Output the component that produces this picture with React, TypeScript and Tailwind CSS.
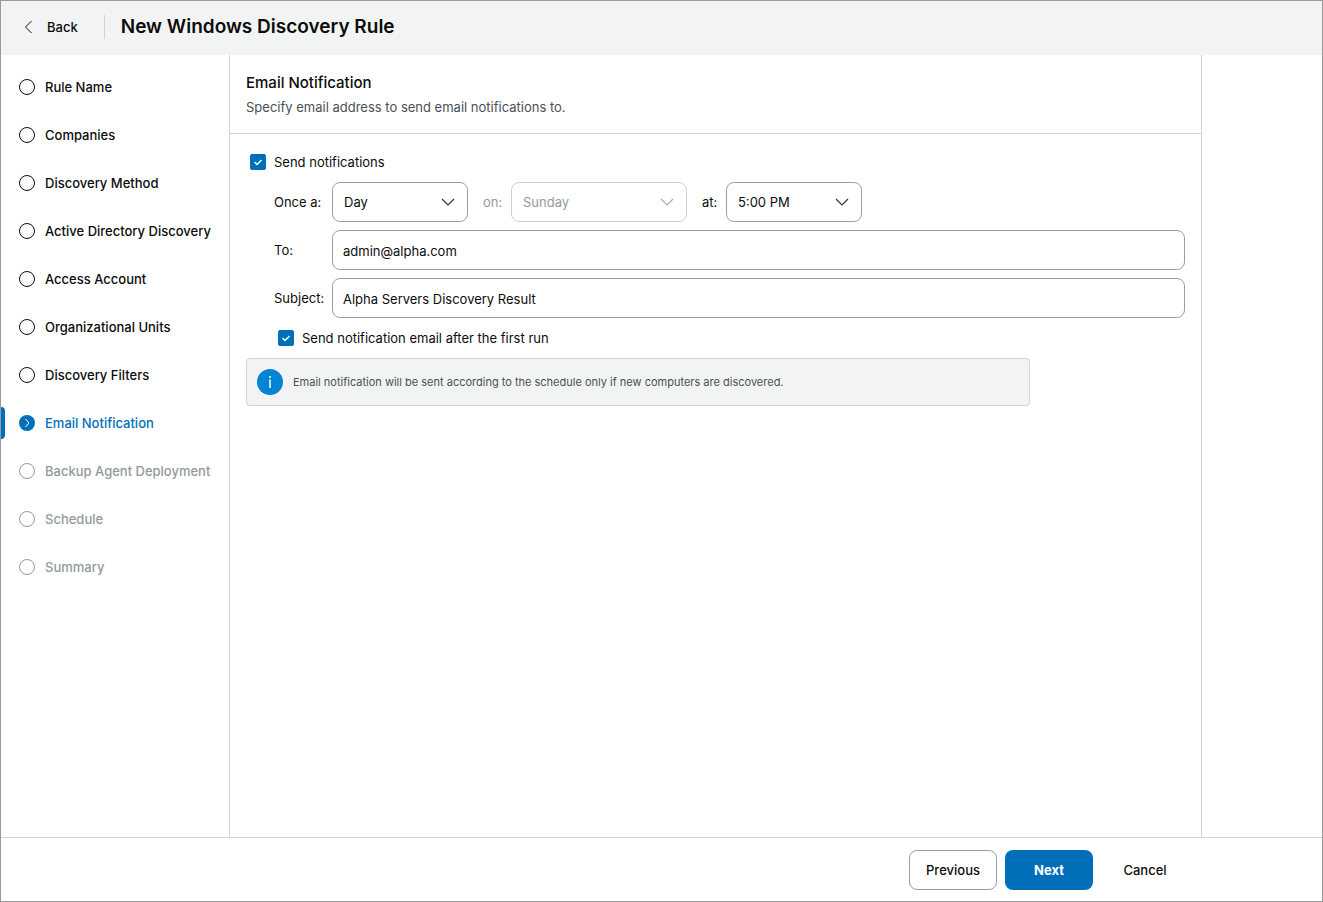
import { useState } from "react";
import type { SelectHTMLAttributes } from "react";
import clsx from "clsx";

type StepStatus = "done" | "current" | "disabled";

//constants
const steps: { label: string; status: StepStatus }[] = [
  { label: "Rule Name", status: "done" },
  { label: "Companies", status: "done" },
  { label: "Discovery Method", status: "done" },
  { label: "Active Directory Discovery", status: "done" },
  { label: "Access Account", status: "done" },
  { label: "Organizational Units", status: "done" },
  { label: "Discovery Filters", status: "done" },
  { label: "Email Notification", status: "current" },
  { label: "Backup Agent Deployment", status: "disabled" },
  { label: "Schedule", status: "disabled" },
  { label: "Summary", status: "disabled" },
];

const periods = ["Day", "Week", "Month"];
const weekDays = [
  "Sunday",
  "Monday",
  "Tuesday",
  "Wednesday",
  "Thursday",
  "Friday",
  "Saturday",
];
const times = ["8:00 AM", "12:00 PM", "5:00 PM", "8:00 PM"];

const StepIcon = ({ status }: { status: StepStatus }) => {
  if (status === "current") {
    return (
      <svg width="16" height="16" viewBox="0 0 16 16" fill="none">
        <circle cx="8" cy="8" r="8" fill="#006fba" />
        <path d="M6.5 4 10 8l-3.5 4" stroke="#fff" />
      </svg>
    );
  }

  return (
    <svg width="16" height="16" viewBox="0 0 16 16" fill="none">
      <circle cx="8" cy="8" r="7.5" stroke="currentColor" />
    </svg>
  );
};

const Sidebar = () => {
  return (
    <nav className="w-[229px] shrink-0 border-r border-[#d0d3d4]">
      <ol className="flex flex-col gap-4 pt-4">
        {steps.map(({ label, status }) => (
          <li key={label} className="flex h-8 items-center">
            <span
              className={clsx(
                "h-8 w-1 rounded-r-sm",
                status === "current" && "bg-[#006fba]"
              )}
            />
            <button
              type="button"
              disabled={status === "disabled"}
              aria-current={status === "current" ? "step" : undefined}
              className={clsx(
                "flex items-center gap-2.5 pl-3.5 font-medium whitespace-nowrap",
                status === "done" && "text-[#0c0c0d]",
                status === "current" && "text-[#006fba]",
                status === "disabled" && "text-[#939a9e]"
              )}
            >
              <StepIcon status={status} />
              {label}
            </button>
          </li>
        ))}
      </ol>
    </nav>
  );
};

const Checkbox = ({
  id,
  label,
  checked,
  onChange,
}: {
  id: string;
  label: string;
  checked: boolean;
  onChange: (checked: boolean) => void;
}) => {
  return (
    <div className="flex h-4 items-center gap-2">
      <span className="grid size-4">
        <input
          id={id}
          type="checkbox"
          checked={checked}
          onChange={(e) => onChange(e.target.checked)}
          className="col-start-1 row-start-1 size-4 appearance-none rounded-xs border border-[#9a9fa2] checked:border-[#006fba] checked:bg-[#006fba]"
        />
        {checked && (
          <svg
            className="pointer-events-none col-start-1 row-start-1"
            width="16"
            height="16"
            viewBox="0 0 16 16"
            fill="none"
          >
            <path d="m4.5 8 2.5 2.5 4.5-4.5" stroke="#fff" strokeWidth="1.5" />
          </svg>
        )}
      </span>
      <label htmlFor={id}>{label}</label>
    </div>
  );
};

const Select = ({
  options,
  width,
  ...props
}: {
  options: string[];
  width: string;
} & SelectHTMLAttributes<HTMLSelectElement>) => {
  return (
    <div className={clsx("grid items-center", width)}>
      <select
        {...props}
        className="col-start-1 row-start-1 h-10 w-full appearance-none rounded-lg border border-[#9a9fa2] bg-white pr-9 pl-[11px] disabled:border-[#cdd0d2] disabled:text-[#939a9e] disabled:opacity-100"
      >
        {options.map((option) => (
          <option key={option}>{option}</option>
        ))}
      </select>
      <svg
        className={clsx(
          "pointer-events-none col-start-1 row-start-1 mr-[13px] justify-self-end",
          props.disabled ? "text-[#a5aaad]" : "text-[#2d3033]"
        )}
        width="14"
        height="8"
        viewBox="0 0 14 8"
        fill="none"
      >
        <path d="m1 1 6 6 6-6" stroke="currentColor" strokeWidth="1.1" />
      </svg>
    </div>
  );
};

const TextField = ({
  id,
  label,
  value,
  onChange,
}: {
  id: string;
  label: string;
  value: string;
  onChange: (value: string) => void;
}) => {
  return (
    <div className="flex items-center">
      <label htmlFor={id} className="w-[58px] shrink-0">
        {label}
      </label>
      <input
        id={id}
        type="text"
        value={value}
        onChange={(e) => onChange(e.target.value)}
        className="h-10 w-full min-w-0 rounded-lg border border-[#9a9fa2] px-2.5 pt-0.5"
      />
    </div>
  );
};

const NotificationForm = () => {
  const [enabled, setEnabled] = useState(true);
  const [period, setPeriod] = useState("Day");
  const [weekDay, setWeekDay] = useState("Sunday");
  const [time, setTime] = useState("5:00 PM");
  const [to, setTo] = useState("admin@alpha.com");
  const [subject, setSubject] = useState("Alpha Servers Discovery Result");
  const [afterFirstRun, setAfterFirstRun] = useState(true);

  const weekDayDisabled = period !== "Week";

  return (
    <form className="flex flex-col gap-3 px-4 py-5">
      <div className="pl-1">
        <Checkbox
          id="enabled"
          label="Send notifications"
          checked={enabled}
          onChange={setEnabled}
        />
      </div>
      <div className="flex flex-col gap-2 pl-7">
        <div className="flex items-center">
          <label htmlFor="period" className="w-[58px] shrink-0">
            Once a:
          </label>
          <Select
            id="period"
            width="w-[136px]"
            options={periods}
            value={period}
            onChange={(e) => setPeriod(e.target.value)}
          />
          <label
            htmlFor="weekDay"
            className={clsx(
              "ml-[15px] w-7",
              weekDayDisabled && "text-[#939a9e]"
            )}
          >
            on:
          </label>
          <Select
            id="weekDay"
            width="w-[176px]"
            options={weekDays}
            value={weekDay}
            disabled={weekDayDisabled}
            onChange={(e) => setWeekDay(e.target.value)}
          />
          <label htmlFor="time" className="ml-[15px] w-6">
            at:
          </label>
          <Select
            id="time"
            width="w-[136px]"
            options={times}
            value={time}
            onChange={(e) => setTime(e.target.value)}
          />
        </div>
        <TextField id="to" label="To:" value={to} onChange={setTo} />
        <TextField
          id="subject"
          label="Subject:"
          value={subject}
          onChange={setSubject}
        />
      </div>
      <div className="pl-8">
        <Checkbox
          id="afterFirstRun"
          label="Send notification email after the first run"
          checked={afterFirstRun}
          onChange={setAfterFirstRun}
        />
      </div>
      <div className="flex h-12 w-full max-w-[784px] items-center gap-2.5 rounded-sm border border-[#d0d3d4] bg-[#f2f4f4] px-2.5 text-[11px] text-[#4a5056]">
        <svg width="26" height="26" viewBox="0 0 26 26" fill="none">
          <circle cx="13" cy="13" r="13" fill="#0284d4" />
          <path d="M13 10.5V19M13 7v2" stroke="#fff" strokeWidth="1.5" />
        </svg>
        <p>
          Email notification will be sent according to the schedule only if new
          computers are discovered.
        </p>
      </div>
    </form>
  );
};

const App = () => {
  return (
    <div className="flex min-h-screen flex-col border border-[#999b9c] bg-white font-['Inter',sans-serif] text-[13px] leading-5 text-[#0c0c0d]">
      <header className="flex h-[54px] items-center bg-[#f2f4f4] pb-0.5 pl-5">
        <button
          type="button"
          className="flex items-center gap-2.5 font-medium"
        >
          <svg width="16" height="16" viewBox="0 0 16 16" fill="none">
            <path d="M10.5 2 4.5 8l6 6" stroke="currentColor" />
          </svg>
          Back
        </button>
        <span className="mr-4 ml-[26px] h-6 w-px bg-[#d0d3d4]" />
        <h1 className="text-[19px] leading-7 font-semibold">
          New Windows Discovery Rule
        </h1>
      </header>

      <div className="flex w-full max-w-[1201px] flex-1">
        <Sidebar />
        <main className="min-w-0 flex-1 border-r border-[#d0d3d4]">
          <div className="flex flex-col gap-0.5 border-b border-[#d0d3d4] p-4">
            <h2 className="text-[15px] leading-6 font-medium">
              Email Notification
            </h2>
            <p className="text-[#4a5056]">
              Specify email address to send email notifications to.
            </p>
          </div>
          <NotificationForm />
        </main>
      </div>

      <footer className="border-t border-[#d0d3d4]">
        <div className="flex max-w-[1200px] justify-end gap-2 px-3 pt-3 pb-[11px] font-medium">
          <button
            type="button"
            className="h-10 w-[88px] rounded-lg border border-[#9a9fa2]"
          >
            Previous
          </button>
          <button
            type="button"
            className="h-10 w-[88px] rounded-lg bg-[#006fba] font-bold text-white"
          >
            Next
          </button>
          <button type="button" className="h-10 w-[88px] rounded-lg">
            Cancel
          </button>
        </div>
      </footer>
    </div>
  );
};

export default App;
